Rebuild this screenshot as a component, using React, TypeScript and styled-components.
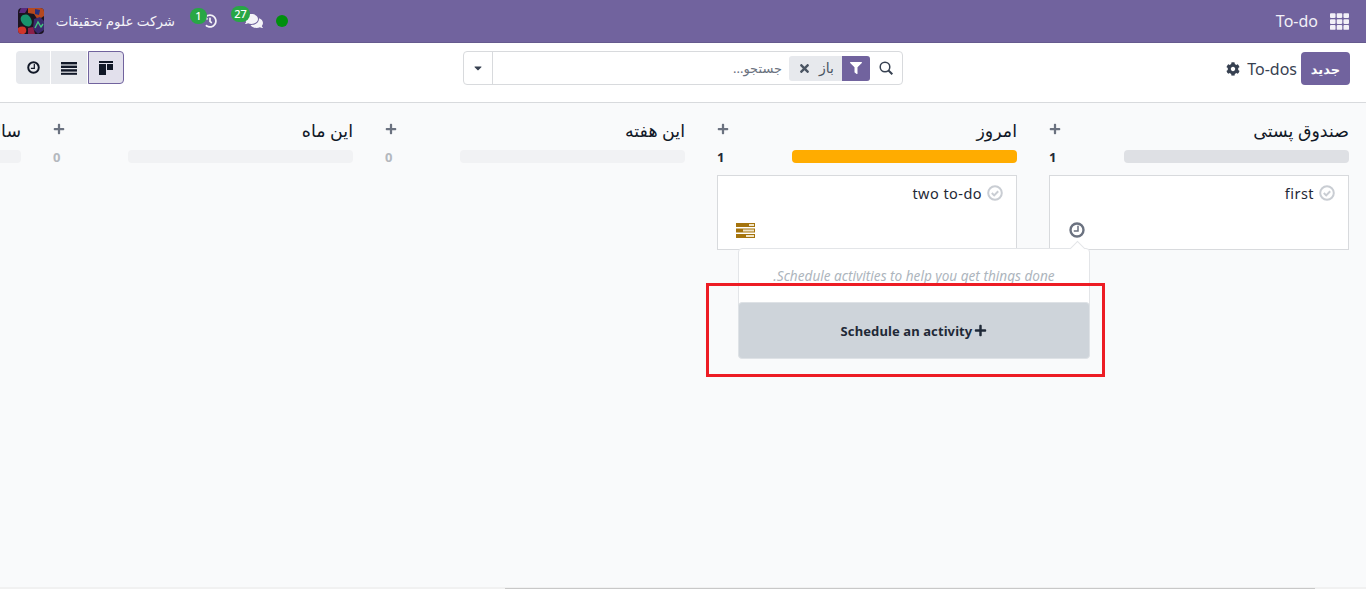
import React from 'react'
import styled, { createGlobalStyle } from 'styled-components'
import { FaCaretDown, FaCog, FaComments, FaFilter, FaHistory, FaPlus, FaTh, FaTimes } from 'react-icons/fa'

const GlobalStyle = createGlobalStyle`
  html, body {
    margin: 0;
    height: 100%;
    overflow: hidden;
    background: #f9fafb;
  }
  body {
    direction: rtl;
    font-family: "Noto Sans", "DejaVu Sans", sans-serif;
    font-size: 13px;
    color: #374151;
  }
`

const Shell = styled.div`
  position: relative;
  display: flex;
  flex-direction: column;
  width: 1366px;
  height: 589px;
  overflow: hidden;
`

const NavBar = styled.header`
  display: flex;
  align-items: center;
  justify-content: space-between;
  height: 42px;
  padding: 0 17px 0 18px;
  background: #71639e;
  border-bottom: 1px solid #655a8e;
  color: #fff;
`

const NavBrand = styled.div`
  display: flex;
  align-items: center;
  gap: 12px;
  font-size: 16px;
  color: #f2f0f7;
`

const NavTools = styled.div`
  display: flex;
  align-items: center;
`

const StatusDot = styled.span`
  width: 12px;
  height: 12px;
  margin-left: 13px;
  border-radius: 50%;
  background: #008f0e;
`

const NavIcon = styled.span<{ $size: number }>`
  position: relative;
  display: flex;
  margin-left: 28px;
  font-size: ${(p) => p.$size}px;
  color: #f4f3f8;
`

const Badge = styled.span<{ $wide?: boolean }>`
  position: absolute;
  top: -6px;
  right: ${(p) => (p.$wide ? 13 : 10)}px;
  min-width: ${(p) => (p.$wide ? 19 : 9)}px;
  height: 16px;
  padding: 0 ${(p) => (p.$wide ? 0 : 4)}px;
  border-radius: 8px;
  background: #28a745;
  color: #fff;
  font-size: 11px;
  font-weight: 500;
  line-height: 15px;
  text-align: center;
`

const Company = styled.span`
  width: 118px;
  margin-left: 13px;
  font-size: 13.4px;
  white-space: nowrap;
  color: #f4f3f8;
`

const Avatar = styled.svg`
  display: block;
  width: 26px;
  height: 26px;
  border-radius: 4px;
`

const ControlPanel = styled.section`
  display: grid;
  grid-template-columns: 1fr 440px 1fr;
  align-items: start;
  box-sizing: border-box;
  height: 60px;
  padding: 9px 16px 0;
  background: #fff;
  border-bottom: 1px solid #d8dadd;
`

const Breadcrumb = styled.div`
  display: flex;
  align-items: center;
  height: 33px;
`

const NewButton = styled.button`
  width: 49px;
  height: 33px;
  padding: 0;
  border: 0;
  border-radius: 4px;
  background: #71639e;
  color: #fff;
  font: 600 13px "Noto Sans", "DejaVu Sans", sans-serif;
`

const PageName = styled.span`
  margin-right: 4px;
  font-size: 16px;
  color: #374151;
`

const Gear = styled.span`
  display: flex;
  margin-right: 7px;
  font-size: 14px;
  color: #374151;
`

const SearchBox = styled.div`
  display: flex;
  align-items: center;
  box-sizing: border-box;
  height: 34px;
  margin-top: -1px;
  background: #fff;
  border: 1px solid #d8dadd;
  border-radius: 4px;
`

const SearchIcon = styled.svg`
  display: block;
  width: 14px;
  height: 14px;
  margin: 0 9px;
`

const Facet = styled.div`
  display: flex;
  align-items: stretch;
  height: 25px;
  border-radius: 3px;
  overflow: hidden;
  background: #e7e9ed;
`

const FacetIcon = styled.span`
  display: flex;
  align-items: center;
  justify-content: center;
  width: 28px;
  background: #71639e;
  color: #fff;
  font-size: 12px;
`

const FacetLabel = styled.span`
  padding: 0 8px;
  font-size: 14px;
  line-height: 24px;
  color: #4b5563;
`

const FacetRemove = styled.span`
  display: flex;
  align-items: center;
  width: 22px;
  font-size: 13px;
  color: #4b5563;
`

const SearchInput = styled.span`
  flex: 1;
  padding-right: 7px;
  font-size: 13px;
  color: #6b7280;
`

const SearchToggle = styled.span`
  display: flex;
  align-items: center;
  justify-content: center;
  width: 28px;
  height: 100%;
  border-right: 1px solid #d8dadd;
  font-size: 12px;
  color: #374151;
`

const ViewSwitcher = styled.div`
  display: flex;
  flex-direction: row-reverse;
  justify-content: flex-end;
  justify-self: end;
  gap: 1px;
  margin-top: -1px;
`

const ViewButton = styled.span<{ $active?: boolean; $width: number }>`
  display: flex;
  align-items: center;
  justify-content: center;
  box-sizing: border-box;
  width: ${(p) => p.$width}px;
  height: 33px;
  color: #111827;
  background: ${(p) => (p.$active ? '#e2e0ec' : '#e7e9ed')};
  border: ${(p) => (p.$active ? '1px solid #71639e' : '0')};
  border-radius: ${(p) => (p.$active ? '0 4px 4px 0' : '0')};
  &:first-child {
    border-radius: 4px 0 0 4px;
  }
`

const Board = styled.main`
  flex: 1;
  display: flex;
  gap: 32px;
  padding: 14px 17px 0 0;
  overflow: hidden;
`

const Column = styled.section`
  flex: 0 0 300px;
  width: 300px;
`

const ColumnHeader = styled.div`
  display: flex;
  align-items: center;
  justify-content: space-between;
  height: 26px;
`

const ColumnTitle = styled.h3`
  margin: 0 0 1px;
  font-size: 17.4px;
  font-weight: 400;
  color: #111827;
`

const AddIcon = styled.span`
  display: flex;
  font-size: 12px;
  color: #6b7280;
  margin-bottom: 2px;
`

const Progress = styled.div`
  display: flex;
  align-items: center;
  justify-content: space-between;
  height: 13px;
  margin-top: 7px;
`

const ProgressBar = styled.div<{ $color: string }>`
  width: 225px;
  height: 13px;
  border-radius: 4px;
  background: ${(p) => p.$color};
`

const Count = styled.span<{ $muted: boolean }>`
  font-size: 13px;
  font-weight: 700;
  color: ${(p) => (p.$muted ? '#b4b8be' : '#1f2937')};
`

const Card = styled.article`
  position: relative;
  box-sizing: border-box;
  height: 75px;
  margin-top: 12px;
  padding: 8px 13px 0 0;
  background: #fff;
  border: 1px solid #d8dadd;
`

const CardTitle = styled.div`
  display: flex;
  align-items: center;
  gap: 5px;
  height: 18px;
  font-size: 14.5px;
  letter-spacing: 0.45px;
  color: #1f2937;
`

const CardFooter = styled.div<{ $inset: number }>`
  position: absolute;
  left: ${(p) => p.$inset}px;
  bottom: 11px;
  display: flex;
`

const Popover = styled.div`
  position: absolute;
  top: 72px;
  left: -312px;
  z-index: 2;
  width: 352px;
  height: 110px;
  box-sizing: border-box;
  background: #fff;
  border: 1px solid #e3e5e8;
  border-radius: 4px;
  &::before {
    content: '';
    position: absolute;
    top: -6px;
    left: 333px;
    width: 10px;
    height: 10px;
    background: #fff;
    border: 1px solid #e3e5e8;
    border-width: 1px 0 0 1px;
    transform: rotate(45deg);
  }
`

const PopoverHint = styled.p`
  margin: 0;
  height: 53px;
  padding-top: 17px;
  box-sizing: border-box;
  text-align: center;
  font-size: 13.6px;
  font-style: italic;
  color: #adb5bd;
`

const ScheduleButton = styled.button`
  display: flex;
  align-items: center;
  justify-content: center;
  gap: 2px;
  width: 352px;
  height: 57px;
  margin: 0 -1px;
  border: 1px solid #dee2e6;
  border-radius: 4px;
  background: #ced4da;
  color: #1f2937;
  font: 700 13px "Noto Sans", "DejaVu Sans", sans-serif;
  letter-spacing: 0.1px;
  svg {
    font-size: 13px;
  }
`

const Annotation = styled.div`
  position: absolute;
  top: 283px;
  left: 706px;
  z-index: 3;
  width: 399px;
  height: 94px;
  box-sizing: border-box;
  border: 3px solid #ed1c24;
`

const ScrollTrack = styled.div`
  position: absolute;
  bottom: 0;
  left: 0;
  right: 0;
  height: 2px;
  background: #f1f1f1;
`

const ScrollThumb = styled.div`
  position: absolute;
  top: 1px;
  left: 505px;
  width: 810px;
  height: 1px;
  background: #c8c8c8;
`

const CompanyLogo = () => (
  <Avatar viewBox='0 0 26 26'>
    <rect width='26' height='26' fill='#1b1420' />
    <path d='M10 0h16v8l-6 4-4-6-6-1z' fill='#b5481f' />
    <path d='M17 1l5 1-1 5-4-1z' fill='#2b2f7a' />
    <path d='M3 9c2-3 6-3 8-1s4 6 2 9-6 1-8-1-3-5-2-7z' fill='#17936c' />
    <path d='M0 20c3-2 7-2 8 1s-1 5-3 5H0z' fill='#d0352a' />
    <path d='M16 11l6-2 4 4v9l-6 4-5-5z' fill='#3a2a6e' />
    <path d='M17 20l3-6 3 5 2-3' fill='none' stroke='#42c47f' strokeWidth='1.4' />
    <path d='M10 20l5-1 2 7h-7z' fill='#8a1f4a' />
    <path d='M3 0h7L7 5H1z' fill='#5b2a7f' />
  </Avatar>
)

const ClockIcon = ({ size, color }: { size: number; color: string }) => (
  <svg width={size} height={size} viewBox='0 0 16 16' fill='none' stroke={color}>
    <circle cx='8' cy='8' r='6.5' strokeWidth='2.4' />
    <path d='M9 3.8v5.2H4.8' strokeWidth='1.5' />
  </svg>
)

const CheckIcon = () => (
  <svg width='16' height='16' viewBox='0 0 16 16' fill='none' stroke='#c9cdd3'>
    <circle cx='8' cy='8' r='6.8' strokeWidth='2' />
    <path d='M4.8 8l2.4 2.4 4-4.2' strokeWidth='2' />
  </svg>
)

const KanbanIcon = () => (
  <svg width='14' height='14' viewBox='0 0 14 14' fill='#111827'>
    <rect width='14' height='2' />
    <rect y='3' width='7' height='11' />
    <rect x='8' y='3' width='6' height='6' />
  </svg>
)

const ListIcon = () => (
  <svg width='16' height='14' viewBox='0 0 16 14' fill='#111827'>
    <rect y='1' width='16' height='2.4' />
    <rect y='4.6' width='16' height='2.4' />
    <rect y='8.2' width='16' height='2.4' />
    <rect y='11.8' width='16' height='2' />
  </svg>
)

const TasksIcon = () => (
  <svg width='19' height='15' viewBox='0 0 19 15'>
    <rect width='19' height='4' fill='#a5740d' />
    <rect x='13' y='1' width='5' height='2' fill='#f0e4c8' />
    <rect y='5.5' width='19' height='4' fill='#a5740d' />
    <rect x='7' y='6.5' width='11' height='2' fill='#f0e4c8' />
    <rect y='11' width='19' height='4' fill='#a5740d' />
    <rect x='10' y='12' width='8' height='2' fill='#f0e4c8' />
  </svg>
)

const columns = [
  { title: 'صندوق پستی', count: 1, color: '#dee0e4', card: 'first', inbox: true },
  { title: 'امروز', count: 1, color: '#ffac00', card: 'two to-do', inbox: false },
  { title: 'این هفته', count: 0, color: '#f1f2f4' },
  { title: 'این ماه', count: 0, color: '#f1f2f4' },
  { title: 'سال بعد', count: 0, color: '#f1f2f4' },
]

const App = () => {
  return (
    <Shell>
      <GlobalStyle />
      <NavBar>
        <NavBrand>
          <FaTh size={19} />
          <span>To-do</span>
        </NavBrand>
        <NavTools>
          <StatusDot />
          <NavIcon $size={18}>
            <FaComments />
            <Badge $wide>27</Badge>
          </NavIcon>
          <NavIcon $size={14}>
            <FaHistory />
            <Badge>1</Badge>
          </NavIcon>
          <Company>شرکت علوم تحقیقات</Company>
          <CompanyLogo />
        </NavTools>
      </NavBar>

      <ControlPanel>
        <Breadcrumb>
          <NewButton>جدید</NewButton>
          <PageName>To-dos</PageName>
          <Gear>
            <FaCog />
          </Gear>
        </Breadcrumb>
        <SearchBox>
          <SearchIcon viewBox='0 0 14 14' fill='none' stroke='#374151' strokeWidth='1.5'>
            <circle cx='6' cy='6' r='4.8' />
            <path d='M9.5 9.5L13.3 13.3' strokeWidth='2' />
          </SearchIcon>
          <Facet>
            <FacetIcon>
              <FaFilter />
            </FacetIcon>
            <FacetLabel>باز</FacetLabel>
            <FacetRemove>
              <FaTimes />
            </FacetRemove>
          </Facet>
          <SearchInput>جستجو...</SearchInput>
          <SearchToggle>
            <FaCaretDown />
          </SearchToggle>
        </SearchBox>
        <ViewSwitcher>
          <ViewButton $width={34}>
            <ClockIcon size={13} color='#111827' />
          </ViewButton>
          <ViewButton $width={36}>
            <ListIcon />
          </ViewButton>
          <ViewButton $width={36} $active>
            <KanbanIcon />
          </ViewButton>
        </ViewSwitcher>
      </ControlPanel>

      <Board>
        {columns.map((col) => (
          <Column key={col.title}>
            <ColumnHeader>
              <ColumnTitle>{col.title}</ColumnTitle>
              <AddIcon>
                <FaPlus />
              </AddIcon>
            </ColumnHeader>
            <Progress>
              <ProgressBar $color={col.color} />
              <Count $muted={col.count === 0}>{col.count}</Count>
            </Progress>
            {col.card && (
              <Card>
                <CardTitle>
                  <CheckIcon />
                  <span>{col.card}</span>
                </CardTitle>
                <CardFooter $inset={col.inbox ? 19 : 18}>
                  {col.inbox ? <ClockIcon size={16} color='#6b7280' /> : <TasksIcon />}
                </CardFooter>
                {col.inbox && (
                  <Popover>
                    <PopoverHint>Schedule activities to help you get things done.</PopoverHint>
                    <ScheduleButton>
                      <FaPlus />
                      Schedule an activity
                    </ScheduleButton>
                  </Popover>
                )}
              </Card>
            )}
          </Column>
        ))}
      </Board>

      <Annotation />
      <ScrollTrack>
        <ScrollThumb />
      </ScrollTrack>
    </Shell>
  )
}

export default App
